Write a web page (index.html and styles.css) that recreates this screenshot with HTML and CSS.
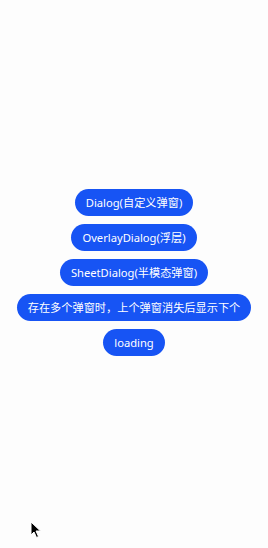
FILE: index.html
```html
<!DOCTYPE html>
<html lang="zh">
<head>
    <meta charset="UTF-8">
    <meta name="viewport" content="width=device-width, initial-scale=1.0">
    <title>弹窗示例</title>
    <link rel="stylesheet" href="styles.css">
</head>
<body>
    <div class="page">
        <button class="btn">Dialog(自定义弹窗)</button>
        <button class="btn">OverlayDialog(浮层)</button>
        <button class="btn">SheetDialog(半模态弹窗)</button>
        <button class="btn">存在多个弹窗时，上个弹窗消失后显示下个</button>
        <button class="btn">loading</button>
    </div>

    <svg class="cursor" width="12" height="18" viewBox="0 0 12 18">
        <path d="M1 1 L1 14 L4 11 L6.5 16.5 L8.5 15.5 L6 10 L10.5 10 Z" fill="#000" stroke="#fff" stroke-width="1"/>
    </svg>
</body>
</html>
```

FILE: styles.css
```css
body {
    margin: 0;
    background-color: #fdfdfd;
    font-family: "Noto Sans", "Noto Sans CJK SC", sans-serif;
}

.page {
    height: 544px;
    display: flex;
    flex-direction: column;
    align-items: center;
    justify-content: center;
    gap: 8px;
}

.btn {
    height: 27px;
    padding: 0 11px;
    border: none;
    border-radius: 14px;
    background-color: #1754f4;
    color: #fff;
    font-family: inherit;
    font-size: 11.2px;
    line-height: 27px;
    white-space: nowrap;
}

.cursor {
    position: absolute;
    left: 30px;
    top: 521px;
}
```
